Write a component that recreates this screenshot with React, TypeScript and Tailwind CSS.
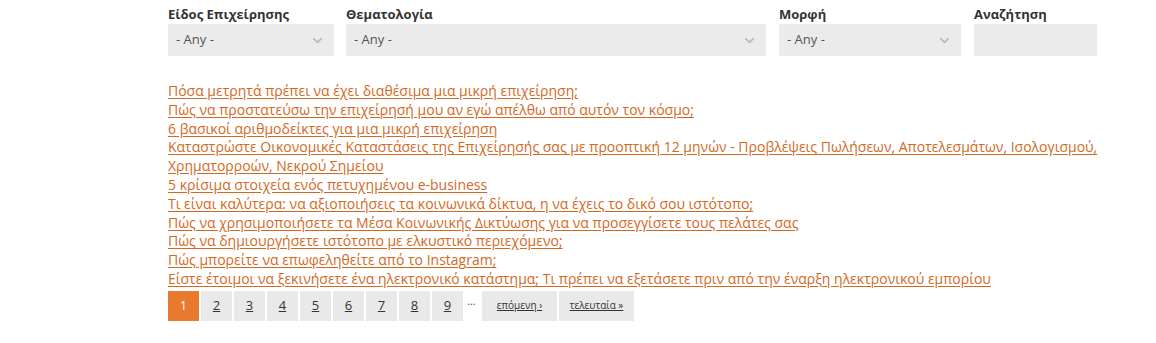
import { ChevronDown } from 'lucide-react';

const links = [
  'Πόσα μετρητά πρέπει να έχει διαθέσιμα μια μικρή επιχείρηση;',
  'Πώς να προστατεύσω την επιχείρησή μου αν εγώ απέλθω από αυτόν τον κόσμο;',
  '6 βασικοί αριθμοδείκτες για μια μικρή επιχείρηση',
  'Καταστρώστε Οικονομικές Καταστάσεις της Επιχείρησής σας με προοπτική 12 μηνών - Προβλέψεις Πωλήσεων, Αποτελεσμάτων, Ισολογισμού, Χρηματορροών, Νεκρού Σημείου',
  '5 κρίσιμα στοιχεία ενός πετυχημένου e-business',
  'Τι είναι καλύτερα: να αξιοποιήσεις τα κοινωνικά δίκτυα, η να έχεις το δικό σου ιστότοπο;',
  'Πώς να χρησιμοποιήσετε τα Μέσα Κοινωνικής Δικτύωσης για να προσεγγίσετε τους πελάτες σας',
  'Πώς να δημιουργήσετε ιστότοπο με ελκυστικό περιεχόμενο;',
  'Πώς μπορείτε να επωφεληθείτε από το Instagram;',
  'Είστε έτοιμοι να ξεκινήσετε ένα ηλεκτρονικό κατάστημα; Τι πρέπει να εξετάσετε πριν από την έναρξη ηλεκτρονικού εμπορίου',
];

function Select({ label, width }: { label: string; width: string }) {
  return (
    <div className={`flex flex-col ${width}`}>
      <label className="text-[13px] font-bold text-[#333] leading-[16px] h-[16px] mb-[2px]">{label}</label>
      <div className="h-[32px] bg-[#ebebeb] flex items-center justify-between pl-[8px] pr-[9px]">
        <span className="text-[13px] text-[#555]">- Any -</span>
        <ChevronDown size={15} strokeWidth={2.5} className="text-[#b8b8b8]" />
      </div>
    </div>
  );
}

export default function App() {
  return (
    <div className="w-[1156px] h-[343px] bg-white" style={{ fontFamily: '"Open Sans", sans-serif' }}>
      <div className="ml-[168px] w-[940px] pt-[6px]">
        {/* Filters */}
        <div className="flex w-[929px]">
          <Select label="Είδος Επιχείρησης" width="w-[166px]" />
          <div className="ml-[12px]">
            <Select label="Θεματολογία" width="w-[420px]" />
          </div>
          <div className="ml-[13px]">
            <Select label="Μορφή" width="w-[182px]" />
          </div>
          <div className="ml-[13px] flex flex-col w-[123px]">
            <label className="text-[13px] font-bold text-[#333] leading-[16px] h-[16px] mb-[2px]">Αναζήτηση</label>
            <div className="h-[32px] bg-[#ebebeb]" />
          </div>
        </div>

        {/* Links */}
        <ul className="mt-[26px] text-[14px] leading-[18.8px]">
          {links.map((t) => (
            <li key={t}>
              <a href="#" className="text-[#d2691e] underline underline-offset-[2px]">
                {t}
              </a>
            </li>
          ))}
        </ul>

        {/* Pagination */}
        <div className="flex items-start gap-[2px] mt-[2px]">
          <span className="w-[31px] h-[30px] bg-[#e77a2e] text-white text-[12px] flex items-center justify-center">1</span>
          {[2, 3, 4, 5, 6, 7, 8, 9].map((n) => (
            <a key={n} href="#" className="w-[31px] h-[30px] bg-[#e9e9e9] text-[#333] text-[13px] underline flex items-center justify-center">
              {n}
            </a>
          ))}
          <span className="w-[15px] text-[#555] text-[11px] leading-[20px] pl-[2px]">…</span>
          <a href="#" className="w-[75px] h-[30px] bg-[#e9e9e9] text-[#333] text-[10px] underline flex items-center justify-center">
            επόμενη ›
          </a>
          <a href="#" className="w-[75px] h-[30px] bg-[#e9e9e9] text-[#333] text-[10px] underline flex items-center justify-center">
            τελευταία »
          </a>
        </div>
      </div>
    </div>
  );
}
